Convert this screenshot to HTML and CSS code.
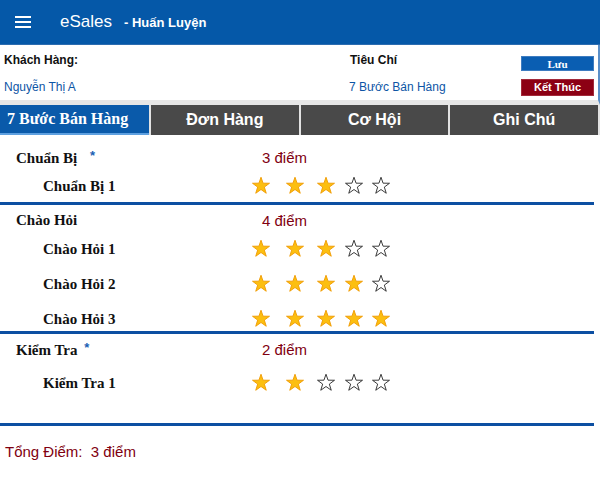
FILE: index.html
```html
<!DOCTYPE html>
<html lang="vi">
<head>
    <meta charset="UTF-8">
    <meta name="viewport" content="width=device-width, initial-scale=1.0">
    <title>eSales - Huấn Luyện</title>
    <link rel="stylesheet" href="styles.css">
</head>
<body>
    <svg class="defs" width="0" height="0">
        <symbol id="star" viewBox="0 0 24 24">
            <polygon points="12,1.5 14.47,8.6 22.2,8.7 16,13.3 18.3,20.7 12,16.2 5.7,20.7 8,13.3 1.8,8.7 9.53,8.6"/>
        </symbol>
    </svg>

    <header class="topbar">
        <span class="menu-btn"><i></i><i></i><i></i></span>
        <span class="brand">eSales</span>
        <span class="subtitle">- Huấn Luyện</span>
    </header>

    <div class="info">
        <div class="info-label">Khách Hàng:</div>
        <div class="info-label info-mid">Tiêu Chí</div>
        <button class="btn btn-save">Lưu</button>
        <div class="info-value">Nguyễn Thị A</div>
        <div class="info-value">7 Bước Bán Hàng</div>
        <button class="btn btn-finish">Kết Thúc</button>
    </div>

    <nav class="tabs">
        <div class="tab active">7 Bước Bán Hàng</div>
        <div class="tab">Đơn Hàng</div>
        <div class="tab">Cơ Hội</div>
        <div class="tab">Ghi Chú</div>
    </nav>

    <main class="content">
        <section class="group">
            <div class="group-head">
                <div class="group-name">Chuẩn Bị <span class="req req-wide">*</span></div>
                <div class="score">3 điểm</div>
            </div>
            <div class="item">
                <div class="item-name">Chuẩn Bị 1</div>
                <div class="stars">
                    <svg class="star on"><use href="#star"/></svg>
                    <svg class="star on"><use href="#star"/></svg>
                    <svg class="star on"><use href="#star"/></svg>
                    <svg class="star"><use href="#star"/></svg>
                    <svg class="star"><use href="#star"/></svg>
                </div>
            </div>
        </section>

        <section class="group">
            <div class="group-head">
                <div class="group-name">Chào Hỏi</div>
                <div class="score">4 điểm</div>
            </div>
            <div class="item">
                <div class="item-name">Chào Hỏi 1</div>
                <div class="stars">
                    <svg class="star on"><use href="#star"/></svg>
                    <svg class="star on"><use href="#star"/></svg>
                    <svg class="star on"><use href="#star"/></svg>
                    <svg class="star"><use href="#star"/></svg>
                    <svg class="star"><use href="#star"/></svg>
                </div>
            </div>
            <div class="item">
                <div class="item-name">Chào Hỏi 2</div>
                <div class="stars">
                    <svg class="star on"><use href="#star"/></svg>
                    <svg class="star on"><use href="#star"/></svg>
                    <svg class="star on"><use href="#star"/></svg>
                    <svg class="star on"><use href="#star"/></svg>
                    <svg class="star"><use href="#star"/></svg>
                </div>
            </div>
            <div class="item">
                <div class="item-name">Chào Hỏi 3</div>
                <div class="stars">
                    <svg class="star on"><use href="#star"/></svg>
                    <svg class="star on"><use href="#star"/></svg>
                    <svg class="star on"><use href="#star"/></svg>
                    <svg class="star on"><use href="#star"/></svg>
                    <svg class="star on"><use href="#star"/></svg>
                </div>
            </div>
        </section>

        <section class="group group-last">
            <div class="group-head">
                <div class="group-name">Kiểm Tra <span class="req">*</span></div>
                <div class="score">2 điểm</div>
            </div>
            <div class="item">
                <div class="item-name">Kiểm Tra 1</div>
                <div class="stars">
                    <svg class="star on"><use href="#star"/></svg>
                    <svg class="star on"><use href="#star"/></svg>
                    <svg class="star"><use href="#star"/></svg>
                    <svg class="star"><use href="#star"/></svg>
                    <svg class="star"><use href="#star"/></svg>
                </div>
            </div>
        </section>

        <div class="total">Tổng Điểm:&nbsp; 3 điểm</div>
    </main>
</body>
</html>
```

FILE: styles.css
```css
body {
    margin: 0;
    padding: 0;
    background: #fff;
    font-family: 'Liberation Sans', Arial, sans-serif;
    color: #222;
}

.defs {
    position: absolute;
    width: 0;
    height: 0;
}

/* top bar */
.topbar {
    height: 44px;
    background: #0558a8;
    color: #fff;
    display: flex;
    align-items: center;
    border-bottom: 1px solid #2c6cb0;
}

.menu-btn {
    display: flex;
    flex-direction: column;
    gap: 3px;
    width: 16px;
    margin-left: 15px;
    margin-right: 29px;
}

.menu-btn i {
    display: block;
    height: 2px;
    background: #fff;
}

.brand {
    font-size: 17px;
    margin-right: 12px;
}

.subtitle {
    font-size: 13px;
    font-weight: bold;
}

/* customer info */
.info {
    display: grid;
    grid-template-columns: 345px 1fr 73px;
    grid-template-rows: 20px 30px;
    align-items: center;
    padding: 5px 4px 0 4px;
    border-right: 2px solid #5b8fc8;
    border-bottom: 5px solid #e6e6e6;
}

.info-label {
    font-size: 12px;
    font-weight: bold;
    color: #111;
}

.info-value {
    font-size: 12px;
    color: #0d55a5;
    padding-top: 3px;
}

.info-mid {
    padding-left: 1px;
}

.btn {
    border: none;
    color: #fff;
    font-weight: bold;
    font-size: 11px;
    padding: 0;
    width: 73px;
}

.btn-save {
    height: 15px;
    margin-top: 7px;
    background: #0a5eb2;
    border: 1px solid #3e7cc0;
    font-family: 'Liberation Serif', 'Times New Roman', serif;
}

.btn-finish {
    height: 17px;
    margin-top: 4px;
    background: #8c0014;
    border: 1px solid #a32a3a;
    font-family: 'Liberation Sans', Arial, sans-serif;
}

/* tabs */
.tabs {
    display: flex;
    gap: 2px;
    background: #e2e2e2;
    padding-right: 2px;
}

.tab {
    flex: 1;
    height: 30px;
    background: #494949;
    color: #fff;
    font-size: 16px;
    font-weight: bold;
    display: flex;
    align-items: center;
    justify-content: center;
}

.tab.active {
    flex: 0 0 142px;
    background: #0a5aaa;
    border-bottom: 2px solid #5ea0e0;
    height: 28px;
    justify-content: flex-start;
    padding-left: 7px;
    font-family: 'Liberation Serif', 'Times New Roman', serif;
}

/* scoring list */
.content {
    width: 594px;
    padding-top: 7px;
}

.group {
    padding: 3px 0 0;
    border-bottom: 3px solid #0c4fa2;
}

.group:first-child {
    padding-bottom: 4px;
}

.group-last {
    padding-bottom: 28px;
}

.group-head,
.item {
    display: grid;
    grid-template-columns: 251px 1fr;
    align-items: center;
    height: 24px;
}

.item {
    margin-top: 11px;
}

.group-head + .item {
    margin-top: 5px;
}

.group-last .group-head + .item {
    margin-top: 10px;
}

.group-name,
.item-name {
    font-family: 'Liberation Serif', 'Times New Roman', serif;
    font-weight: bold;
    font-size: 15px;
    color: #111;
}

.group-name {
    padding-left: 16px;
}

.item-name {
    padding-left: 43px;
}

.req {
    color: #1a5fb4;
    font-family: 'Liberation Sans', Arial, sans-serif;
    font-size: 13px;
    vertical-align: 3px;
    margin-left: 3px;
}

.req-wide {
    margin-left: 9px;
}

.score {
    padding-left: 11px;
    font-size: 15px;
    color: #800010;
}

.stars {
    display: flex;
    align-items: center;
}

.star {
    width: 20px;
    height: 20px;
    fill: #fff;
    stroke: #2a2a2a;
    stroke-width: 1.1;
}

.star.on {
    fill: #fcbf10;
    stroke: #f09a00;
}

.star:nth-child(1) { margin-right: 14px; }
.star:nth-child(2) { margin-right: 11px; }
.star:nth-child(3) { margin-right: 8px; }
.star:nth-child(4) { margin-right: 7px; }

.total {
    padding: 17px 5px;
    font-size: 15px;
    color: #800010;
}
```
